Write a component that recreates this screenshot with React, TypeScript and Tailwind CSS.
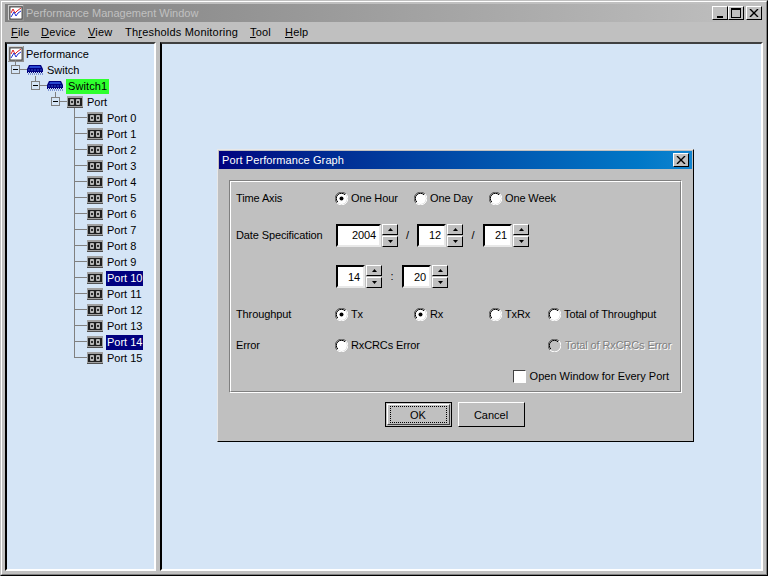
import type { ReactNode } from "react";

const ports = Array.from({ length: 16 }, (_, i) => i);
const selectedPorts = [10, 14];

function ChartIcon() {
  return (
    <svg width="16" height="16" viewBox="0 0 16 16" className="shrink-0">
      <rect x="0" y="0" width="16" height="16" fill="#909090" />
      <rect x="0" y="0" width="15" height="1" fill="#d0d0d0" />
      <rect x="0" y="0" width="1" height="15" fill="#d0d0d0" />
      <rect x="2" y="2" width="12" height="12" fill="#fff" stroke="#303030" strokeWidth="0.8" />
      <path d="M3 8 L5 4 L7 8 L9 6 L13 3" fill="none" stroke="#e02020" />
      <path d="M3 12 L6 7 L8 11 L10 8 L13 6" fill="none" stroke="#2030d0" />
    </svg>
  );
}

function SwitchIcon() {
  return (
    <svg width="16" height="10" viewBox="0 0 16 10" className="shrink-0">
      <path d="M2 0 H14 L16 4 V7 H0 V4 Z" fill="#000080" />
      <path d="M3 1 H13 L14 3 H2 Z" fill="#2848d0" />
      <path d="M1 5 H15" stroke="#3050c0" strokeDasharray="2 1" />
      <path d="M0 7.5 H16" stroke="#000080" strokeDasharray="1 1" />
      <path d="M1 9 H16" stroke="#2040b0" strokeDasharray="1 1" />
    </svg>
  );
}

function PortIcon() {
  return (
    <svg width="16" height="12" viewBox="0 0 16 12" className="shrink-0">
      <rect x="0" y="0" width="16" height="12" fill="#a0a0a0" />
      <rect x="0" y="11" width="16" height="1" fill="#505050" />
      <rect x="1" y="2" width="14" height="8" fill="#202020" />
      <rect x="3" y="3" width="4" height="6" rx="1" fill="#b8b8b8" />
      <rect x="9" y="3" width="4" height="6" rx="1" fill="#b8b8b8" />
      <rect x="4" y="5" width="2" height="2" fill="#303030" />
      <rect x="10" y="5" width="2" height="2" fill="#303030" />
    </svg>
  );
}

function ExpandBox({ left }: { left: number }) {
  return (
    <span
      className="absolute top-[3px] flex h-[9px] w-[9px] items-center justify-center border border-[#808080] bg-[#d5e5f6]"
      style={{ left }}
    >
      <span className="h-px w-[5px] bg-black" />
    </span>
  );
}

function Line({ x, y, w, h }: { x: number; y: number; w: number; h: number }) {
  return <span className="absolute bg-[#808080]" style={{ left: x, top: y, width: w, height: h }} />;
}

function TreeRow({ pad, children }: { pad: number; children: ReactNode }) {
  return (
    <div className="relative flex h-4 items-center" style={{ paddingLeft: pad }}>
      {children}
    </div>
  );
}

function Tree() {
  return (
    <div className="pt-[2px] leading-[15px]">
      <TreeRow pad={1}>
        <ChartIcon />
        <span className="ml-[2px]">Performance</span>
      </TreeRow>
      <TreeRow pad={20}>
        <Line x={8} y={-2} w={1} h={5} />
        <Line x={12} y={7} w={8} h={1} />
        <ExpandBox left={4} />
        <SwitchIcon />
        <span className="ml-[4px]">Switch</span>
      </TreeRow>
      <TreeRow pad={40}>
        <Line x={28} y={-2} w={1} h={5} />
        <Line x={32} y={7} w={8} h={1} />
        <ExpandBox left={24} />
        <SwitchIcon />
        <span className="ml-[3px] bg-[#2eff2e] px-[2px] tracking-[0.1px]">Switch1</span>
      </TreeRow>
      <TreeRow pad={60}>
        <Line x={48} y={-2} w={1} h={5} />
        <Line x={52} y={7} w={8} h={1} />
        <ExpandBox left={44} />
        <PortIcon />
        <span className="ml-[4px]">Port</span>
      </TreeRow>
      {ports.map((p) => {
        const selected = selectedPorts.includes(p);
        return (
          <TreeRow key={p} pad={80}>
            <Line x={67} y={-2} w={1} h={p === 15 ? 10 : 18} />
            <Line x={67} y={7} w={13} h={1} />
            <PortIcon />
            <span className={`ml-[3px] px-px ${selected ? "bg-[#000080] text-white" : ""}`}>Port {p}</span>
          </TreeRow>
        );
      })}
    </div>
  );
}

function CaptionButton({ children, className }: { children: ReactNode; className?: string }) {
  return (
    <span
      className={`flex h-[14px] w-[16px] items-center justify-center border border-t-white border-l-white border-r-black border-b-black bg-[#c0c0c0] ${className ?? ""}`}
    >
      {children}
    </span>
  );
}

function CloseGlyph() {
  return (
    <svg width="10" height="8" viewBox="0 0 10 8">
      <path d="M1 0 L9 8 M9 0 L1 8" stroke="#000" strokeWidth="1.4" fill="none" />
    </svg>
  );
}

function Radio({ checked, disabled }: { checked?: boolean; disabled?: boolean }) {
  return (
    <svg width="13" height="13" viewBox="0 0 13 13" className="shrink-0">
      <circle cx="6.5" cy="6.5" r="5.5" fill={disabled ? "#c0c0c0" : "#fff"} />
      <path d="M2 11 A6 6 0 0 1 11 2" fill="none" stroke="#606060" strokeWidth="1" />
      <path d="M2.8 10 A5 5 0 0 1 10 2.8" fill="none" stroke="#000" strokeWidth="1" />
      <path d="M11 2 A6 6 0 0 1 2 11" fill="none" stroke="#fff" strokeWidth="1" />
      {checked && <circle cx="6.5" cy="6.5" r="2" fill="#000" />}
    </svg>
  );
}

function RadioItem({ label, checked, disabled, width }: { label: string; checked?: boolean; disabled?: boolean; width?: number }) {
  return (
    <div className="flex shrink-0 items-center gap-[3px]" style={{ width }}>
      <Radio checked={checked} disabled={disabled} />
      <span className={disabled ? "ml-px text-[#808080] [text-shadow:1px_1px_0_#fff]" : ""}>{label}</span>
    </div>
  );
}

function Arrow({ down }: { down?: boolean }) {
  return (
    <svg width="5" height="3" viewBox="0 0 5 3">
      <path d={down ? "M0 0 H5 L2.5 3 Z" : "M2.5 0 L5 3 H0 Z"} fill="#000" />
    </svg>
  );
}

function Spinner({ value, width }: { value: string; width: number }) {
  return (
    <div className="flex h-[23px] shrink-0 gap-px">
      <div
        className="flex items-center justify-end border-2 border-t-black border-l-black border-r-[#e8e8e8] border-b-[#e8e8e8] bg-white pt-px pr-[3px]"
        style={{ width }}
      >
        {value}
      </div>
      <div className="flex w-4 flex-col">
        <span className="flex h-[11px] items-center justify-center border border-t-white border-l-white border-r-black border-b-black bg-[#c0c0c0]">
          <Arrow />
        </span>
        <span className="mt-px flex h-[11px] items-center justify-center border border-t-white border-l-white border-r-black border-b-black bg-[#c0c0c0]">
          <Arrow down />
        </span>
      </div>
    </div>
  );
}

function FieldRow({ label, top, height, children }: { label?: string; top: number; height: number; children: ReactNode }) {
  return (
    <div className="flex items-center pl-[5px]" style={{ marginTop: top, height }}>
      <span className="w-[99px] shrink-0 whitespace-nowrap">{label}</span>
      {children}
    </div>
  );
}

function PortGraphDialog() {
  return (
    <div className="absolute top-[148px] left-[216px] h-[293px] w-[477px] border border-t-[#e8e8e8] border-l-[#e8e8e8] border-r-black border-b-black bg-[#c0c0c0] p-px">
      <div className="flex h-[18px] items-center justify-between bg-gradient-to-r from-[#000080] to-[#1084d0] pr-[3px] pl-[3px] tracking-[0.1px] text-white">
        <span>Port Performance Graph</span>
        <CaptionButton>
          <CloseGlyph />
        </CaptionButton>
      </div>
      <div className="mx-[10px] mt-[11px] h-[213px] border border-t-[#808080] border-l-[#808080] border-r-white border-b-white tracking-[-0.12px]">
        <div className="h-full border border-t-white border-l-white border-r-[#808080] border-b-[#808080]">
          <FieldRow label="Time Axis" top={0} height={33}>
            <RadioItem label="One Hour" checked width={79} />
            <RadioItem label="One Day" width={75} />
            <RadioItem label="One Week" />
          </FieldRow>
          <FieldRow label="Date Specification" top={9} height={22}>
            <div className="ml-[1px] flex items-center">
              <Spinner value="2004" width={45} />
              <span className="w-[19px] text-center">/</span>
              <Spinner value="12" width={29} />
              <span className="w-[20px] text-center">/</span>
              <Spinner value="21" width={29} />
            </div>
          </FieldRow>
          <FieldRow top={19} height={23}>
            <div className="ml-[1px] flex items-center">
              <Spinner value="14" width={29} />
              <span className="w-[20px] text-center">:</span>
              <Spinner value="20" width={29} />
            </div>
          </FieldRow>
          <FieldRow label="Throughput" top={18} height={16}>
            <RadioItem label="Tx" checked width={79} />
            <RadioItem label="Rx" checked width={75} />
            <RadioItem label="TxRx" width={59} />
            <RadioItem label="Total of Throughput" />
          </FieldRow>
          <FieldRow label="Error" top={15} height={16}>
            <RadioItem label="RxCRCs Error" width={213} />
            <RadioItem label="Total of RxCRCs Error" disabled />
          </FieldRow>
          <div className="mt-[15px] flex items-center justify-end gap-[4px] pr-[11px] tracking-normal">
            <span className="h-[13px] w-[13px] border border-t-[#404040] border-l-[#404040] border-r-white border-b-white bg-white" />
            <span>Open Window for Every Port</span>
          </div>
        </div>
      </div>
      <div className="mt-[9px] flex justify-center gap-[6px] pr-[2px]">
        <button type="button" className="h-[25px] w-[67px] border border-black bg-[#c0c0c0] p-px">
          <span className="flex h-full items-center justify-center border border-t-white border-l-white border-r-[#404040] border-b-[#404040]">
            <span className="flex h-[17px] w-[57px] items-center justify-center border border-dotted border-black pt-px">OK</span>
          </span>
        </button>
        <button
          type="button"
          className="h-[25px] w-[67px] border border-t-white border-l-white border-r-black border-b-black bg-[#c0c0c0] pt-px"
        >
          Cancel
        </button>
      </div>
    </div>
  );
}

export default function App() {
  const panel = "border-2 border-t-[#404040] border-l-black border-r-white border-b-white bg-[#d5e5f6]";
  return (
    <div className="relative h-[576px] w-[768px] overflow-hidden border border-t-[#c0c0c0] border-l-[#c0c0c0] border-r-black border-b-black bg-[#c0c0c0] font-['Liberation_Sans',Arial,sans-serif] text-[11px] text-black">
      <div className="flex h-full flex-col border border-t-white border-l-white border-r-[#808080] border-b-[#808080] px-[3px] pt-[2px] pb-[3px]">
        <div className="flex h-[18px] items-center justify-between bg-gradient-to-r from-[#808080] to-[#c0c0c0] pl-[3px] pr-px">
          <div className="flex items-center gap-[2px] text-[#c0c0c0]">
            <ChartIcon />
            <span>Performance Management Window</span>
          </div>
          <div className="flex">
            <CaptionButton>
              <span className="mt-[7px] h-[2px] w-[6px] bg-black" />
            </CaptionButton>
            <CaptionButton className="mr-[2px]">
              <span className="h-[10px] w-[10px] border border-t-2 border-black" />
            </CaptionButton>
            <CaptionButton>
              <CloseGlyph />
            </CaptionButton>
          </div>
        </div>
        <div className="flex h-5 items-center whitespace-nowrap pl-[6px] tracking-[0.2px]">
          <span className="w-[30px]"><u>F</u>ile</span>
          <span className="w-[47px]"><u>D</u>evice</span>
          <span className="w-[37px]"><u>V</u>iew</span>
          <span className="w-[125px]">Th<u>r</u>esholds Monitoring</span>
          <span className="w-[35px]"><u>T</u>ool</span>
          <span><u>H</u>elp</span>
        </div>
        <div className="flex min-h-0 flex-1 gap-[4px]">
          <div className={`w-[151px] ${panel}`}>
            <Tree />
          </div>
          <div className={`flex-1 ${panel}`} />
        </div>
      </div>
      <PortGraphDialog />
    </div>
  );
}
